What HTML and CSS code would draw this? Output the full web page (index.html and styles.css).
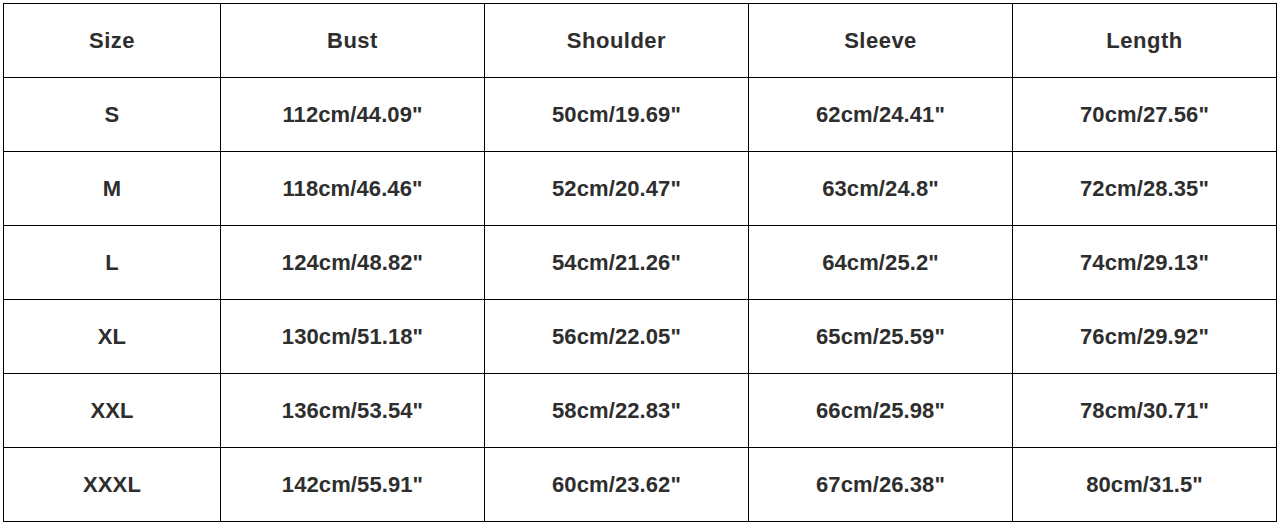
FILE: index.html
```html
<!DOCTYPE html>
<html lang="en">
<head>
<meta charset="utf-8">
<title>Size Chart</title>
<link rel="stylesheet" href="styles.css">
</head>
<body>
<table class="size-table">
  <colgroup>
    <col class="col-size">
    <col class="col-val">
    <col class="col-val">
    <col class="col-val">
    <col class="col-val">
  </colgroup>
  <thead>
    <tr><th>Size</th><th>Bust</th><th>Shoulder</th><th>Sleeve</th><th>Length</th></tr>
  </thead>
  <tbody>
    <tr><td>S</td><td>112cm/44.09"</td><td>50cm/19.69"</td><td>62cm/24.41"</td><td>70cm/27.56"</td></tr>
    <tr><td>M</td><td>118cm/46.46"</td><td>52cm/20.47"</td><td>63cm/24.8"</td><td>72cm/28.35"</td></tr>
    <tr><td>L</td><td>124cm/48.82"</td><td>54cm/21.26"</td><td>64cm/25.2"</td><td>74cm/29.13"</td></tr>
    <tr><td>XL</td><td>130cm/51.18"</td><td>56cm/22.05"</td><td>65cm/25.59"</td><td>76cm/29.92"</td></tr>
    <tr><td>XXL</td><td>136cm/53.54"</td><td>58cm/22.83"</td><td>66cm/25.98"</td><td>78cm/30.71"</td></tr>
    <tr><td>XXXL</td><td>142cm/55.91"</td><td>60cm/23.62"</td><td>67cm/26.38"</td><td>80cm/31.5"</td></tr>
  </tbody>
</table>
</body>
</html>
```
FILE: styles.css
```css
html, body {
  margin: 0;
  padding: 0;
  background: #ffffff;
}

.size-table {
  margin: 3px;
  width: 1274px;
  table-layout: fixed;
  border-collapse: separate;
  border-spacing: 1px;
  background: #000000;
  font-family: "Liberation Sans", Arial, sans-serif;
  font-size: 22px;
  font-weight: bold;
  color: #2e2e2e;
}

.col-size {
  width: 216px;
}

.col-val {
  width: 263px;
}

.size-table th,
.size-table td {
  background: #ffffff;
  height: 73px;
  padding: 0;
  text-align: center;
  vertical-align: middle;
  font-weight: bold;
  box-sizing: border-box;
}

.size-table th {
  letter-spacing: 0.5px;
}

.size-table td {
  letter-spacing: 0.1px;
}
```
